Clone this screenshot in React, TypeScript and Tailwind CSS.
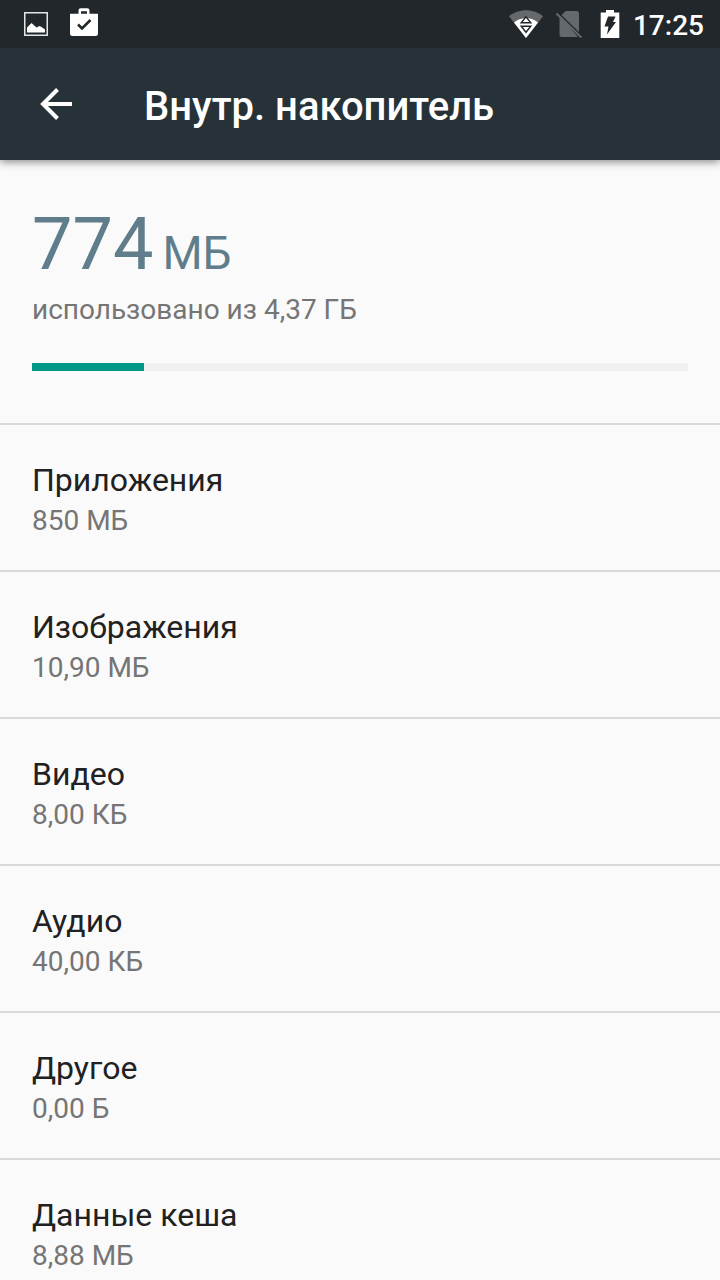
interface StorageItem {
  title: string;
  size: string;
}

const ITEMS: StorageItem[] = [
  { title: 'Приложения', size: '850 МБ' },
  { title: 'Изображения', size: '10,90 МБ' },
  { title: 'Видео', size: '8,00 КБ' },
  { title: 'Аудио', size: '40,00 КБ' },
  { title: 'Другое', size: '0,00 Б' },
  { title: 'Данные кеша', size: '8,88 МБ' },
];

const USED_PERCENT = 17;

function ScreenshotIcon() {
  return (
    <svg className="h-6 w-6" viewBox="0 0 24 24" fill="none" aria-hidden="true">
      <rect x="0.75" y="0.75" width="22.5" height="22.5" stroke="#e4e5e5" strokeWidth="1.5" />
      <path fill="#fff" d="M3 20.5v-5L7.5 11l5 4.500 3-1.500 2 1 3.500 2.500v3z" />
    </svg>
  );
}

function StoreIcon() {
  return (
    <svg className="h-7 w-7" viewBox="0 0 28 28" aria-hidden="true">
      <path
        fill="#fff"
        fillRule="evenodd"
        d="M8.500 5.700V2.500A2.200 2.200 0 0 1 10.700.3h6.600a2.200 2.200 0 0 1 2.200 2.200v3.200H28v20a2.300 2.300 0 0 1-2.300 2.300H2.300A2.300 2.300 0 0 1 0 25.700v-20zM11 5.700h6V3.200h-6z"
      />
      <path fill="none" stroke="#21272b" strokeWidth="2.6" d="m8 16.500 4 4L20.500 12" />
    </svg>
  );
}

function WifiIcon() {
  return (
    <svg className="h-7 w-[34px]" viewBox="0 0 34 28" aria-hidden="true">
      <path fill="#65696c" d="M0 6.200C4.500 2.600 10.500.3 17 .3s12.500 2.300 17 5.900L17 28z" />
      <path fill="#fff" d="M5 12.600C8 9.800 12.300 8.300 17 8.300s9 1.500 12 4.300L17 28z" />
      <path fill="#fff" stroke="#21272b" strokeWidth="1.4" d="m17 6.800-4.800 6h9.600zM12.200 16.300h9.600L17 22.300z" />
    </svg>
  );
}

function NoSimIcon() {
  return (
    <svg className="h-7 w-[26px]" viewBox="0 0 26 28" aria-hidden="true">
      <path fill="#65696c" d="M9.800 1h10.900A2.300 2.300 0 0 1 23 3.300v21L3.500 7z" />
      <path fill="#65696c" d="M3.500 5v19.700a2.300 2.300 0 0 0 2.300 2.300h16z" />
      <path fill="none" stroke="#21272b" strokeWidth="1.6" d="M2.500 3.300 26 26" />
      <path fill="none" stroke="#65696c" strokeWidth="2" d="M.5 3.500 25.500 27.600" />
    </svg>
  );
}

function BatteryIcon() {
  return (
    <svg className="h-7 w-5" viewBox="0 0 20 28" aria-hidden="true">
      <path fill="#fff" d="M6 0h8v2.500h5.300V28H.7V2.500H6z" />
      <path fill="#21272b" d="M8 6.500h7.500L13 12h3L7 24.500l1.500-8h-4z" />
    </svg>
  );
}

function BackIcon() {
  return (
    <svg className="h-8 w-8" viewBox="0 0 32 32" fill="none" stroke="#fff" strokeWidth="4" aria-hidden="true">
      <path d="M32 16H3M17.500 1.500 3 16l14.500 14.500" />
    </svg>
  );
}

function StatusBar() {
  return (
    <div className="relative z-10 flex h-12 shrink-0 items-center justify-between bg-[#21272b] pl-6 pr-4">
      <div className="flex items-center gap-[22px]">
        <ScreenshotIcon />
        <div className="pb-1">
          <StoreIcon />
        </div>
      </div>
      <div className="flex items-center">
        <WifiIcon />
        <div className="ml-[13px]">
          <NoSimIcon />
        </div>
        <div className="ml-[18px]">
          <BatteryIcon />
        </div>
        <time className="ml-[13px] pt-[3px] text-[28px] leading-8 font-medium text-white">17:25</time>
      </div>
    </div>
  );
}

function StorageRow({ item }: { item: StorageItem }) {
  return (
    <li className="border-t-2 border-[#dadada]">
      <button type="button" className="block w-full px-8 pt-[31px] pb-[33px] text-left">
        <span className="block text-[32px] leading-12 text-[#212121]">{item.title}</span>
        <span className="block text-[28px] leading-[33px] text-[#757575]">{item.size}</span>
      </button>
    </li>
  );
}

export default function App() {
  return (
    <div className="flex h-screen flex-col overflow-hidden bg-[#fafafa] font-['Roboto',sans-serif]">
      <StatusBar />

      <header className="relative flex h-28 shrink-0 items-center bg-[#263238] px-10 shadow-[0_2px_8px_rgba(0,0,0,0.45)]">
        <button type="button" aria-label="Назад">
          <BackIcon />
        </button>
        <h1 className="ml-[72px] pt-1.5 text-[40px] leading-12 font-medium text-white">Внутр. накопитель</h1>
      </header>

      <main className="min-h-0 flex-1 overflow-y-auto [scrollbar-width:none]">
        <section className="px-8 pt-[45px] pb-13">
          <p className="flex items-baseline gap-[9px] text-[72px] leading-20 text-[#607d8b]">
            774 <span className="text-[46px]">МБ</span>
          </p>
          <p id="usage" className="text-[28px] leading-[33px] text-[#757575]">
            использовано из 4,37 ГБ
          </p>
          <div
            role="progressbar"
            aria-labelledby="usage"
            aria-valuenow={USED_PERCENT}
            aria-valuemin={0}
            aria-valuemax={100}
            className="mt-[37px] h-2 bg-[#f0f0f0]"
          >
            <div className="h-full bg-[#009688]" style={{ width: `${USED_PERCENT}%` }} />
          </div>
        </section>

        <ul>
          {ITEMS.map(item => (
            <StorageRow key={item.title} item={item} />
          ))}
        </ul>
      </main>
    </div>
  );
}
